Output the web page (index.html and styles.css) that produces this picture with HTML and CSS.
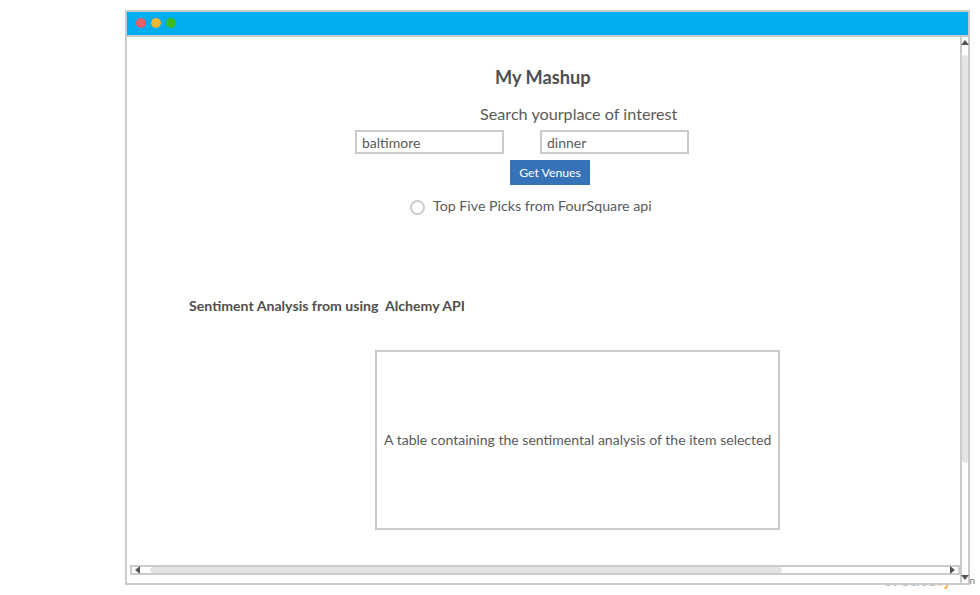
FILE: index.html
```html
<!DOCTYPE html>
<html lang="en">
<head>
<meta charset="utf-8">
<title>My Mashup</title>
<link rel="stylesheet" href="styles.css">
</head>
<body>
<div class="brand"><span class="brand-name">create<span class="brand-l">l</span><span class="brand-tail">y</span></span><span class="brand-domain">n</span></div>
<div class="window">
  <header class="titlebar">
    <span class="dot close"></span><span class="dot minimize"></span><span class="dot expand"></span>
  </header>
  <div class="body">
    <main class="content">
      <h1>My Mashup</h1>
      <p class="subtitle">Search yourplace of interest</p>
      <div class="fields">
        <input class="field" type="text" value="baltimore" aria-label="Place">
        <input class="field" type="text" value="dinner" aria-label="Interest">
      </div>
      <button class="submit">Get Venues</button>
      <div class="option"><span class="radio"></span><span class="option-text">Top Five Picks from FourSquare api</span></div>
      <h2>Sentiment Analysis from using&nbsp; Alchemy API</h2>
      <div class="table-box"><span class="table-text">A table containing the sentimental analysis of the item selected</span></div>
      <div class="hscroll">
        <svg class="arrow-left" width="5" height="8" viewBox="0 0 5 8"><path d="M5 0v8L0 4z"/></svg>
        <div class="hthumb"></div>
        <svg class="arrow-right" width="5" height="8" viewBox="0 0 5 8"><path d="M0 0v8l5-4z"/></svg>
      </div>
    </main>
    <div class="vscroll">
      <svg width="8" height="5" viewBox="0 0 8 5"><path d="M0 5h8L4 0z"/></svg>
      <div class="vthumb"></div>
      <svg class="arrow-down" width="8" height="5" viewBox="0 0 8 5"><path d="M0 0h8L4 5z"/></svg>
    </div>
  </div>
</div>
</body>
</html>
```
FILE: styles.css
```css
* { box-sizing: border-box; }
body {
  margin: 0;
  width: 980px;
  height: 595px;
  overflow: hidden;
  background: #fff;
  color: #5a5a5a;
  font-family: Lato, sans-serif;
}
h1, h2, p { margin: 0; white-space: nowrap; }
.window {
  position: relative;
  display: flex;
  flex-direction: column;
  width: 845px;
  height: 575px;
  margin: 10px 0 0 125px;
  border: 2px solid #cbcbcb;
  background: #fff;
}
.titlebar {
  display: flex;
  align-items: center;
  gap: 5px;
  flex: none;
  height: 25px;
  padding: 0 0 1px 9px;
  border-bottom: 2px solid #cbcbcb;
  background: #00adef;
}
.dot { width: 10px; height: 10px; border-radius: 50%; }
.close { background: #e95f6b; }
.minimize { background: #ebb735; }
.expand { background: #3dbb20; }
.body { display: flex; flex: 1; min-height: 0; }
.content { display: flex; flex-direction: column; align-items: flex-start; width: 833px; flex: none; }
h1 { margin: 28px 0 0 368px; font-size: 18.2px; line-height: 24px; color: #4f4f4f; }
.subtitle { margin: 13px 0 0 353px; font-size: 16.2px; line-height: 24px; }
.fields { display: flex; gap: 36px; margin: 4px 0 0 228px; }
.field {
  width: 149px;
  height: 24px;
  padding: 0 5px;
  border: 2px solid #cbcbcb;
  border-radius: 0;
  background: #fff;
  color: #5a5a5a;
  font: 14px/18px Lato, sans-serif;
  outline: 0;
}
.submit {
  width: 80px;
  height: 25px;
  margin: 6px 0 0 383px;
  padding: 0;
  border: 0;
  background: #3572b8;
  color: #fff;
  font: 12.25px/25px Lato, sans-serif;
  white-space: nowrap;
}
.option { display: flex; align-items: center; gap: 8px; height: 20px; margin: 11px 0 0 283px; }
.radio { width: 15px; height: 15px; margin-top: 3px; border: 2px solid #cbcbcb; border-radius: 50%; }
.option-text { font-size: 14.22px; line-height: 20px; white-space: nowrap; }
h2 { margin: 80px 0 0 62px; font-size: 14.13px; line-height: 20px; color: #4f4f4f; }
.table-box {
  display: flex;
  align-items: center;
  width: 405px;
  height: 180px;
  margin: 34px 0 0 248px;
  padding-left: 7px;
  border: 2px solid #cbcbcb;
}
.table-text { font-size: 14.06px; line-height: 20px; white-space: nowrap; }
.hscroll {
  display: flex;
  align-items: center;
  width: 830px;
  height: 10px;
  margin: 35px 0 0 3px;
  padding: 0 3px;
  border: 2px solid #cbcbcb;
}
svg { display: block; flex: none; fill: #555; }
.hthumb { width: 632px; height: 6px; margin-left: 10px; border-radius: 3px; background: #e3e3e3; }
.arrow-right { margin-left: auto; }
.vscroll {
  display: flex;
  flex-direction: column;
  align-items: center;
  width: 8px;
  padding: 3px 0;
  border-left: 2px solid #cbcbcb;
}
.vscroll svg { margin-left: -1px; margin-right: -1px; }
.vthumb { width: 6px; height: 408px; margin-top: 10px; border-radius: 3px; background: #e3e3e3; }
.vscroll .arrow-down { margin-top: auto; }
.brand {
  position: absolute;
  left: 883px;
  top: 566px;
  display: flex;
  align-items: flex-start;
  width: 92px;
  justify-content: space-between;
  white-space: nowrap;
  line-height: 26px;
}
.brand-name { font-size: 19.5px; font-weight: 700; color: #b4c5d5; }
.brand-l { color: #fbc98a; }
.brand-tail { color: #fbaf4c; }
.brand-domain { font-size: 10px; line-height: 28px; color: #777; }
```
